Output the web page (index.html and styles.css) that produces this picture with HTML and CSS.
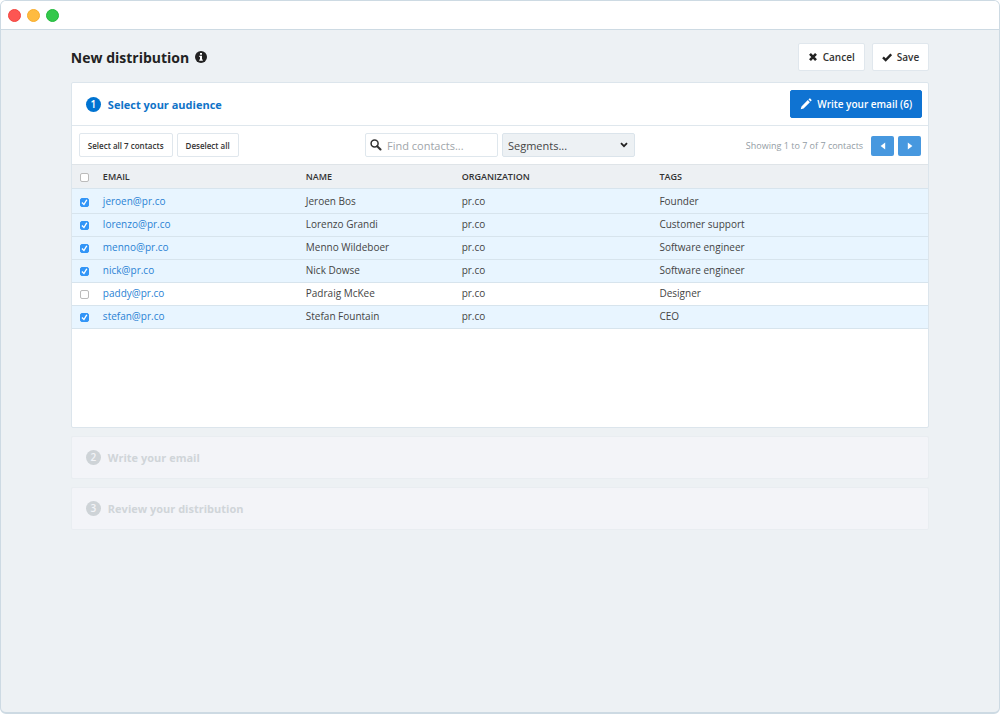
FILE: index.html
```html
<!DOCTYPE html>
<html lang="en">
<head>
  <meta charset="UTF-8">
  <meta name="viewport" content="width=device-width, initial-scale=1.0">
  <title>New distribution</title>
  <link rel="stylesheet" href="styles.css">
</head>
<body>
  <div class="window">
    <div class="titlebar">
      <span class="dot red"></span>
      <span class="dot yellow"></span>
      <span class="dot green"></span>
    </div>

    <main class="content">
      <header class="page-header">
        <h1>New distribution</h1>
        <svg class="info" viewBox="0 0 12 12" width="12" height="12"><circle cx="6" cy="6" r="6" fill="#222"/><path d="M5 2h2v1.700H5zM4.300 4.700H7v3.800h.8v1.300H4.200V8.500H5V6h-.7z" fill="#fff"/></svg>
        <div class="actions">
          <button class="btn" type="button">
            <svg viewBox="0 0 10 10" width="10" height="10"><path d="M2 1.800l6 6.400M8 1.800L2 8.200" stroke="#222" stroke-width="2.600"/></svg>
            Cancel
          </button>
          <button class="btn" type="button">
            <svg viewBox="0 0 10 10" width="10" height="10"><path d="M1 5.300l2.700 2.700L9.200 2.300" fill="none" stroke="#222" stroke-width="2.400"/></svg>
            Save
          </button>
        </div>
      </header>

      <section class="card">
        <div class="step">
          <span class="number">1</span>
          <h2>Select your audience</h2>
          <button class="btn primary" type="button">
            <svg viewBox="0 0 12 12" width="12" height="12"><path d="M.7 11.300l.8-2.900 6.300-6.300 2.100 2.100-6.300 6.300zM8.500 1.400l.8-.8q.5-.4 1 0l1.100 1.100q.4.500 0 1l-.8.800z" fill="#fff"/></svg>
            Write your email (6)
          </button>
        </div>

        <div class="toolbar">
          <div class="bulk">
            <button class="btn small" type="button">Select all 7 contacts</button>
            <button class="btn small" type="button">Deselect all</button>
          </div>
          <div class="filters">
            <label class="search">
              <svg viewBox="0 0 12 12" width="12" height="12"><circle cx="4.600" cy="4.600" r="3.500" fill="none" stroke="#333" stroke-width="1.500"/><path d="M7.200 7.200l3.300 3.300" stroke="#333" stroke-width="2.100" stroke-linecap="round"/></svg>
              <input type="text" placeholder="Find contacts..." aria-label="Find contacts">
            </label>
            <div class="select">
              <select aria-label="Segments">
                <option>Segments...</option>
              </select>
              <svg viewBox="0 0 8 6" width="8" height="6"><path d="M1 1.200l3 3 3-3" fill="none" stroke="#222" stroke-width="1.800"/></svg>
            </div>
          </div>
          <div class="pager">
            <span>Showing 1 to 7 of 7 contacts</span>
            <button class="page" type="button" aria-label="Previous page"><svg viewBox="0 0 6 8" width="6" height="8"><path d="M5.200 .4v7.200L.6 4z" fill="#fff"/></svg></button>
            <button class="page" type="button" aria-label="Next page"><svg viewBox="0 0 6 8" width="6" height="8"><path d="M.8 .4v7.200L5.400 4z" fill="#fff"/></svg></button>
          </div>
        </div>

        <table class="contacts">
          <thead>
            <tr>
              <th class="check"><input type="checkbox" aria-label="Select all"></th>
              <th class="email">Email</th>
              <th class="name">Name</th>
              <th class="org">Organization</th>
              <th>Tags</th>
            </tr>
          </thead>
          <tbody>
            <tr class="selected">
              <td><input type="checkbox" aria-label="Jeroen Bos" checked></td>
              <td><a href="#">jeroen@pr.co</a></td>
              <td>Jeroen Bos</td>
              <td>pr.co</td>
              <td>Founder</td>
            </tr>
            <tr class="selected">
              <td><input type="checkbox" aria-label="Lorenzo Grandi" checked></td>
              <td><a href="#">lorenzo@pr.co</a></td>
              <td>Lorenzo Grandi</td>
              <td>pr.co</td>
              <td>Customer support</td>
            </tr>
            <tr class="selected">
              <td><input type="checkbox" aria-label="Menno Wildeboer" checked></td>
              <td><a href="#">menno@pr.co</a></td>
              <td>Menno Wildeboer</td>
              <td>pr.co</td>
              <td>Software engineer</td>
            </tr>
            <tr class="selected">
              <td><input type="checkbox" aria-label="Nick Dowse" checked></td>
              <td><a href="#">nick@pr.co</a></td>
              <td>Nick Dowse</td>
              <td>pr.co</td>
              <td>Software engineer</td>
            </tr>
            <tr>
              <td><input type="checkbox" aria-label="Padraig McKee"></td>
              <td><a href="#">paddy@pr.co</a></td>
              <td>Padraig McKee</td>
              <td>pr.co</td>
              <td>Designer</td>
            </tr>
            <tr class="selected">
              <td><input type="checkbox" aria-label="Stefan Fountain" checked></td>
              <td><a href="#">stefan@pr.co</a></td>
              <td>Stefan Fountain</td>
              <td>pr.co</td>
              <td>CEO</td>
            </tr>
          </tbody>
        </table>
      </section>

      <section class="card disabled">
        <div class="step">
          <span class="number">2</span>
          <h2>Write your email</h2>
        </div>
      </section>

      <section class="card disabled">
        <div class="step">
          <span class="number">3</span>
          <h2>Review your distribution</h2>
        </div>
      </section>
    </main>
  </div>
</body>
</html>
```
FILE: styles.css
```css
* {
  box-sizing: border-box;
}
body {
  margin: 0;
  background-color: #fff;
  font-family: "Open Sans", "Noto Sans", sans-serif;
  font-size: 10px;
  color: #444;
}
button, input, select {
  font-family: inherit;
  margin: 0;
}
svg {
  flex: none;
}
.window {
  min-height: 100vh;
  border: 1px solid #cddae3;
  border-width: 1px 1px 2px;
  border-radius: 6px;
  background-color: #edf1f4;
  overflow: hidden;
}
.titlebar {
  display: flex;
  align-items: center;
  gap: 6px;
  height: 29px;
  padding: 0 7px;
  background-color: #fff;
  border-bottom: 1px solid #cddae3;
}
.dot {
  width: 13px;
  height: 13px;
  border-radius: 50%;
}
.red {
  background-color: #fd5652;
  border: 1px solid #f2453f;
}
.yellow {
  background-color: #febb40;
  border: 1px solid #f8ad2c;
}
.green {
  background-color: #33c84b;
  border: 1px solid #20b83a;
}
.content {
  padding: 13px 7%;
}

/* Page header */
.page-header {
  display: flex;
  align-items: center;
  height: 28px;
  margin-bottom: 11px;
}
h1 {
  margin: 0;
  font-size: 14px;
  color: #222;
}
.info {
  margin-left: 6px;
}
.actions {
  display: flex;
  gap: 7px;
  margin-left: auto;
}
.btn {
  display: flex;
  align-items: center;
  gap: 5px;
  height: 28px;
  padding: 0 9px;
  background-color: #fff;
  border: 1px solid #e0e7ed;
  border-radius: 2px;
  color: #333;
  font-size: 10px;
  font-weight: 600;
  cursor: pointer;
}
.primary {
  margin-left: auto;
  background-color: #0f73d2;
  border-color: #0f73d2;
  color: #fff;
}
.small {
  height: 24px;
  padding: 0 8px;
  font-size: 8px;
}

/* Steps */
.card {
  margin-bottom: 8px;
  background-color: #fff;
  border: 1px solid #dce5ec;
  border-radius: 2px;
}
.card:first-of-type {
  min-height: 346px;
}
.step {
  display: flex;
  align-items: center;
  height: 42px;
  padding: 0 6px 0 14px;
}
.number {
  width: 15px;
  height: 15px;
  border-radius: 50%;
  background-color: #0073d1;
  color: #fff;
  font-weight: 600;
  line-height: 15px;
  text-align: center;
}
h2 {
  margin: 0 0 0 7px;
  font-size: 11px;
  color: #0f73c8;
}
.disabled {
  background-color: #f3f4f8;
  border-color: #e9edf1;
}
.disabled .step {
  height: 41px;
}
.disabled .number {
  background-color: #ced3d7;
  color: #f3f4f8;
}
.disabled h2 {
  color: #d0d5d9;
}

/* Toolbar */
.toolbar {
  display: grid;
  grid-template-columns: 1fr auto 1fr;
  align-items: center;
  height: 39px;
  padding: 0 7px;
  border-top: 1px solid #dfe7ed;
}
.bulk, .filters {
  display: flex;
  gap: 4px;
}
.search {
  display: flex;
  align-items: center;
  gap: 5px;
  width: 133px;
  height: 24px;
  padding: 0 4px;
  border: 1px solid #dfe7ed;
  border-radius: 2px;
}
.search input {
  width: 100%;
  min-width: 0;
  padding: 1px 0 0;
  border: 0;
  outline: none;
  background: none;
  font-size: 11px;
}
.search input::placeholder {
  color: #a0a5aa;
}
.select {
  display: grid;
  align-items: center;
  width: 133px;
}
.select select, .select svg {
  grid-area: 1 / 1;
}
.select select {
  appearance: none;
  width: 100%;
  height: 24px;
  padding: 1px 5px 0;
  background-color: #edf1f4;
  border: 1px solid #dbe4eb;
  border-radius: 2px;
  color: #444;
  font-size: 11px;
}
.select svg {
  justify-self: end;
  margin-right: 7px;
  pointer-events: none;
}
.pager {
  display: flex;
  align-items: center;
  justify-content: flex-end;
  gap: 4px;
  padding-top: 1px;
  color: #939ca4;
  font-size: 9px;
}
.pager span {
  margin-right: 4px;
}
.page {
  display: flex;
  align-items: center;
  justify-content: center;
  width: 23px;
  height: 20px;
  padding: 0;
  background-color: #4798df;
  border: 0;
  border-radius: 2px;
  cursor: pointer;
}

/* Contacts */
.contacts {
  width: 100%;
  table-layout: fixed;
  border-collapse: collapse;
  line-height: 14px;
}
th, td {
  height: 23px;
  padding: 0 0 2px;
  border-bottom: 1px solid #d7e4ed;
  text-align: left;
}
th {
  height: 24px;
  padding: 1px 0 0;
  background-color: #edf0f3;
  border-top: 1px solid #dfe4e8;
  color: #333;
  font-size: 9px;
  font-weight: 600;
  text-transform: uppercase;
}
tbody tr:first-child td {
  height: 25px;
  padding-top: 2px;
}
.check {
  width: 31px;
}
.email {
  width: 23.700%;
}
.name {
  width: 18.200%;
}
.org {
  width: 23.100%;
}
.selected {
  background-color: #e8f5ff;
}
.contacts a {
  color: #2a82d4;
  text-decoration: none;
}
.contacts input {
  appearance: none;
  display: block;
  width: 9px;
  height: 9px;
  margin-left: 8px;
  background-color: #fff;
  border: 1px solid #bbb;
  border-radius: 2px;
}
.contacts td input {
  margin-top: 3px;
}
.contacts input:checked {
  background-color: #3295f7;
  border-color: #3295f7;
}
.contacts input:checked::after {
  content: "";
  display: block;
  width: 7px;
  height: 7px;
  background-color: #fff;
  clip-path: polygon(8% 56%, 24% 42%, 42% 64%, 76% 6%, 94% 16%, 46% 92%);
}
```
